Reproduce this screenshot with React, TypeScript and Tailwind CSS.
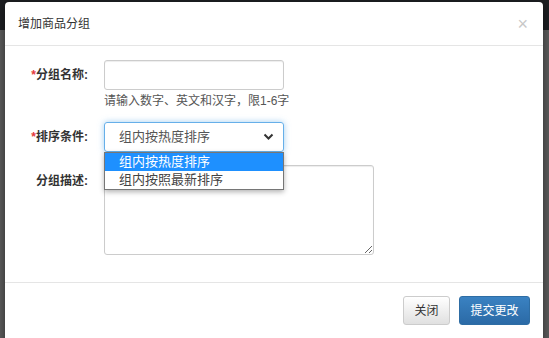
import React from 'react';

const font = { fontFamily: '"Liberation Sans", "Noto Sans CJK SC", sans-serif' };

const App: React.FC = () => {
  return (
    <div className="relative w-[549px] h-[338px] overflow-hidden flex flex-col" style={font}>
      {/* page behind the overlay */}
      <div className="h-[30px] bg-[#1d1f22]" />
      <div className="flex-1 bg-[#5b5b5b]" />

      {/* modal */}
      <div className="absolute left-[5px] top-[2px] w-[538px] h-[345px] bg-white rounded-[4px] shadow-[0_3px_9px_rgba(0,0,0,0.5)] flex flex-col">
        <div className="h-[44px] flex items-center justify-between pl-[13px] pr-[15px] border-b border-[#e5e5e5]">
          <span className="text-[12px] text-[#333]">增加商品分组</span>
          <span className="text-[18px] leading-none text-[#c8c8c8] font-light">×</span>
        </div>

        <div className="relative h-[236px] pt-[14px]">
          <div className="flex">
            <label className="w-[83px] text-right text-[12px] font-bold text-[#333] pt-[6px]">
              <span className="text-[#e4393c]">*</span>分组名称:
            </label>
            <div className="ml-4 flex flex-col">
              <input className="w-[180px] h-[30px] border border-[#ccc] rounded-[3px] shadow-[inset_0_1px_1px_rgba(0,0,0,0.075)] outline-none" />
              <span className="mt-[3px] text-[12px] leading-[16px] text-[#555]">请输入数字、英文和汉字，限1-6字</span>
            </div>
          </div>

          <div className="flex mt-[13px]">
            <label className="w-[83px] text-right text-[12px] font-bold text-[#333] pt-[6px]">
              <span className="text-[#e4393c]">*</span>排序条件:
            </label>
            <div className="ml-4 w-[180px] h-[30px] border border-[#66afe9] rounded-[3px] shadow-[0_0_6px_rgba(102,175,233,0.6)] flex items-center justify-between pl-[14px] pr-[9px]">
              <span className="text-[13px] text-[#555]">组内按热度排序</span>
              <svg width="11" height="8" viewBox="0 0 11 8">
                <path d="M1.5 1.5 L5.5 5.5 L9.5 1.5" fill="none" stroke="#333" strokeWidth="2" />
              </svg>
            </div>
          </div>

          <div className="flex mt-[13px]">
            <label className="w-[83px] text-right text-[12px] font-bold text-[#333] pt-[7px]">
              分组描述:
            </label>
            <textarea className="ml-4 w-[270px] h-[90px] border border-[#ccc] rounded-[3px] shadow-[inset_0_1px_1px_rgba(0,0,0,0.075)] outline-none resize" />
          </div>

          {/* open select list */}
          <div className="absolute left-[99px] top-[106px] w-[180px] border border-[#767676] bg-white shadow-[0_2px_5px_rgba(0,0,0,0.3)] text-[13px] leading-[18px]">
            <div className="bg-[#1e90ff] text-white pl-[14px]">组内按热度排序</div>
            <div className="text-[#444] pl-[14px]">组内按照最新排序</div>
          </div>
        </div>

        <div className="border-t border-[#e5e5e5] flex justify-end items-start gap-[9px] pt-[13px] pr-[13px]">
          <button className="w-[47px] h-[29px] rounded-[3px] border border-[#ccc] bg-gradient-to-b from-white to-[#e0e0e0] text-[12px] text-[#333]">
            关闭
          </button>
          <button className="w-[71px] h-[29px] rounded-[3px] border border-[#2e6da4] bg-gradient-to-b from-[#3a82c2] to-[#2b6aa6] text-[12px] text-white">
            提交更改
          </button>
        </div>
      </div>
    </div>
  );
};

export default App;
